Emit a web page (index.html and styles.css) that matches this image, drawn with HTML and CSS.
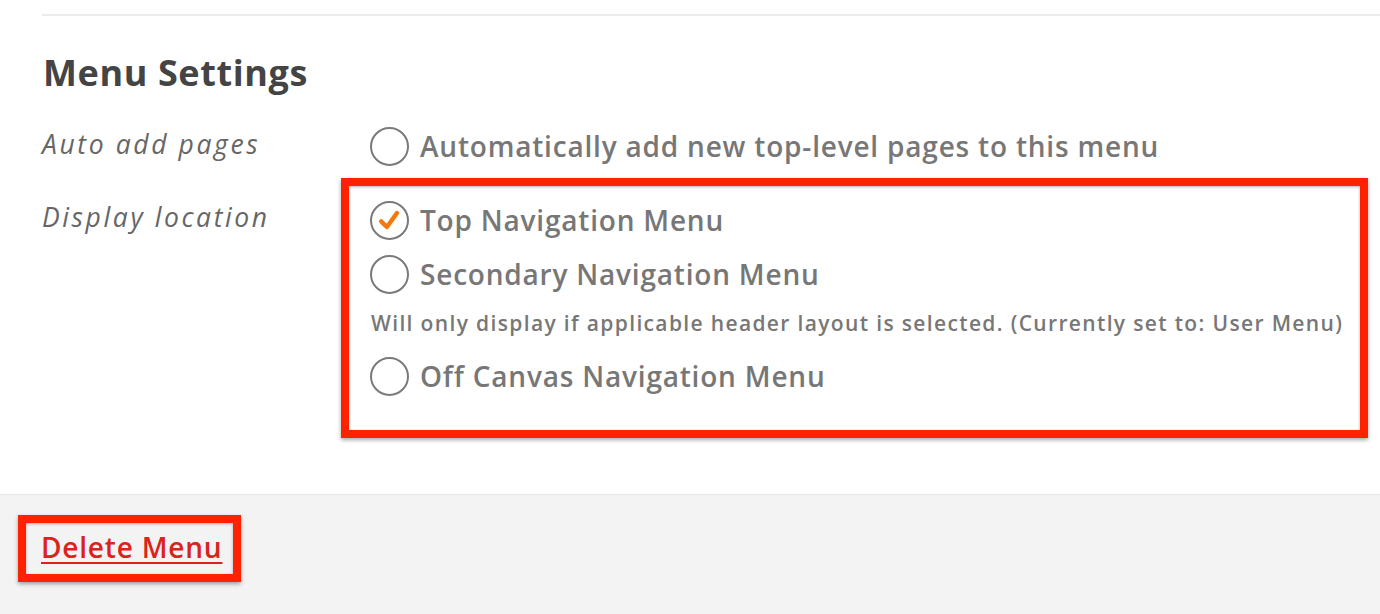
FILE: index.html
```html
<!DOCTYPE html>
<html>
<head>
<meta charset="utf-8">
<link rel="stylesheet" href="styles.css">
</head>
<body>
<div class="page">
  <div class="rule"></div>
  <section class="menu-settings">
    <h2 class="title">Menu Settings</h2>
    <div class="grid">
      <div class="label label-auto">Auto add pages</div>
      <div class="options-plain">
        <label class="option">
          <span class="radio"></span>
          <span class="opt-text">Automatically add new top-level pages to this menu</span>
        </label>
      </div>

      <div class="label label-display">Display location</div>
      <div class="options-box">
        <label class="option">
          <span class="radio checked">
            <svg viewBox="0 0 40 40" width="40" height="40"><path d="M10.5 21 L17 27.5 L28.5 11.5" fill="none" stroke="#f5780a" stroke-width="5" stroke-linecap="round" stroke-linejoin="round"/></svg>
          </span>
          <span class="opt-text">Top Navigation Menu</span>
        </label>
        <label class="option">
          <span class="radio"></span>
          <span class="opt-text">Secondary Navigation Menu</span>
        </label>
        <p class="note">Will only display if applicable header layout is selected. (Currently set to: User Menu)</p>
        <label class="option">
          <span class="radio"></span>
          <span class="opt-text">Off Canvas Navigation Menu</span>
        </label>
      </div>
    </div>
  </section>
  <footer class="footer">
    <div class="delete-box"><a class="delete-link" href="#">Delete Menu</a></div>
  </footer>
</div>
</body>
</html>
```
FILE: styles.css
```css
html, body {
  margin: 0;
  padding: 0;
  background: #ffffff;
  font-family: "Open Sans", "Noto Sans", "Liberation Sans", sans-serif;
}

.page {
  width: 1380px;
  height: 614px;
  overflow: hidden;
  display: flex;
  flex-direction: column;
}

.rule {
  margin: 14px 0 0 42px;
  height: 2px;
  background: #ececec;
}

.menu-settings {
  padding: 0 12px 0 42px;
}

.title {
  margin: 34px 0 0 1px;
  font-size: 36px;
  line-height: 46px;
  font-weight: 700;
  color: #444444;
  letter-spacing: 0.6px;
}

.grid {
  margin-top: 30px;
  display: grid;
  grid-template-columns: 299px 1fr;
}

.label {
  font-style: italic;
  font-size: 26.5px;
  line-height: 40px;
  color: #666666;
  font-weight: 500;
  letter-spacing: 2.6px;
  white-space: nowrap;
}

.label-auto {
  margin-top: -2px;
}

.label-display {
  padding-top: 19px;
}

.options-plain {
  padding-left: 29px;
  padding-bottom: 12px;
}

.options-box {
  border: 8px solid #ff2200;
  padding: 14px 0 34px 21px;
  box-shadow: 0 2px 4px rgba(0, 0, 0, 0.35), inset 0 1px 3px rgba(0, 0, 0, 0.3);
  display: flex;
  flex-direction: column;
  gap: 14px;
}

.option {
  display: flex;
  align-items: center;
  gap: 11px;
  height: 40px;
}

.radio {
  width: 35px;
  height: 35px;
  border: 2px solid #7a7a7a;
  border-radius: 50%;
  flex: none;
  display: flex;
  align-items: center;
  justify-content: center;
  box-sizing: content-box;
}

.radio svg {
  width: 35px;
  height: 35px;
}

.opt-text {
  font-size: 28px;
  font-weight: 600;
  color: #777777;
  letter-spacing: 0.8px;
  white-space: nowrap;
}

.note {
  margin: 2px 0 6px 1px;
  font-size: 21px;
  line-height: 26px;
  font-weight: 600;
  color: #777777;
  letter-spacing: 1.35px;
  white-space: nowrap;
}

.footer {
  margin-top: 56px;
  flex: 1;
  background: #f3f3f3;
  border-top: 1px solid #e6e6e6;
  padding: 20px 0 0 18px;
}

.delete-box {
  display: inline-block;
  border: 8px solid #ff2200;
  padding: 8px 11px 10px 15px;
  box-shadow: 0 2px 4px rgba(0, 0, 0, 0.35), inset 0 1px 3px rgba(0, 0, 0, 0.3);
}

.delete-link {
  font-size: 28px;
  line-height: 33px;
  font-weight: 600;
  color: #d9231c;
  letter-spacing: 0.8px;
  text-decoration: underline;
  text-decoration-thickness: 2px;
  text-underline-offset: 4px;
}
```
